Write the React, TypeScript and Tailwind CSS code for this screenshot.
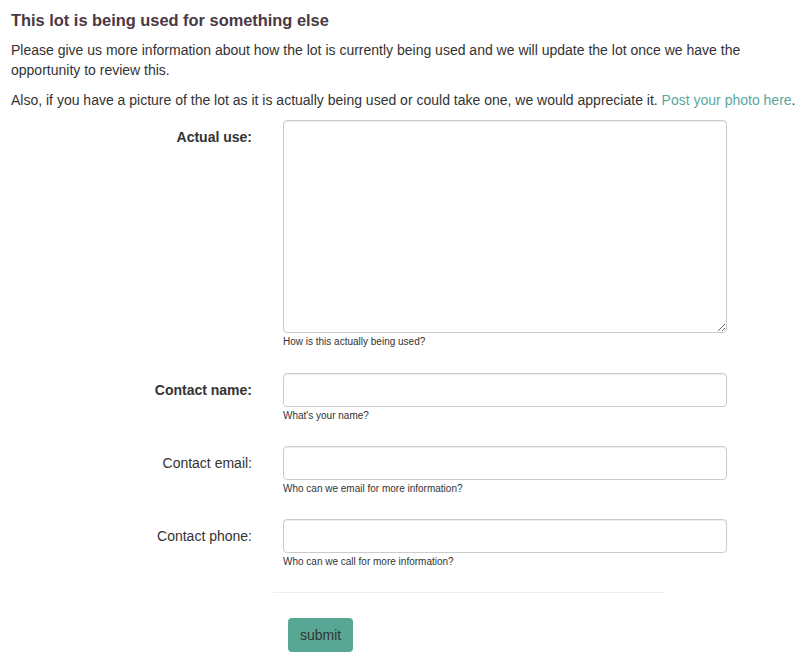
const fieldClass =
  "block w-[444px] rounded-[4px] border border-[#ccc] bg-white px-3 py-[6px] text-[14px] text-[#555] shadow-[inset_0_1px_1px_rgba(0,0,0,0.075)] outline-none";

function Field({
  label,
  help,
  bold,
  className = "",
  children,
}: {
  label: string;
  help: string;
  bold?: boolean;
  className?: string;
  children: React.ReactNode;
}) {
  return (
    <div className={`flex gap-[31px] ${className}`}>
      <label
        className={`w-[241px] shrink-0 pt-[7px] text-right text-[14px] leading-[20px] ${
          bold ? "font-bold" : "font-normal"
        }`}
      >
        {label}
      </label>
      <div>
        {children}
        <p className="mt-[2px] text-[10px] leading-[14px] text-[#333]">{help}</p>
      </div>
    </div>
  );
}

export default function App() {
  return (
    <div className="min-h-screen bg-white pl-[11px] pr-0 pt-[10px] font-['Liberation_Sans',Arial,sans-serif] text-[14px] leading-[20px] text-[#333]">
      <h3 className="mb-[10px] text-[16.4px] font-bold leading-[20px] text-[#4b3843]">
        This lot is being used for something else
      </h3>
      <p className="mb-[10px] pr-[11px]">
        Please give us more information about how the lot is currently being used and we will
        update the lot once we have the opportunity to review this.
      </p>
      <p className="mb-[10px] whitespace-nowrap">
        Also, if you have a picture of the lot as it is actually being used or could take one, we
        would appreciate it.{" "}
        <a href="#" className="text-[#5aa7a0]">
          Post your photo here
        </a>
        .
      </p>

      <form className="flex flex-col gap-[23px]">
        <Field label="Actual use:" help="How is this actually being used?" bold className="mb-[1px]">
          <textarea className={`${fieldClass} h-[213px]`} />
        </Field>
        <Field label="Contact name:" help="What's your name?" bold>
          <input type="text" className={`${fieldClass} h-[34px]`} />
        </Field>
        <Field label="Contact email:" help="Who can we email for more information?">
          <input type="email" className={`${fieldClass} h-[34px]`} />
        </Field>
        <Field label="Contact phone:" help="Who can we call for more information?">
          <input type="tel" className={`${fieldClass} h-[34px]`} />
        </Field>

        <div className="ml-[262px] w-[392px] border-t border-[#eee]" />
      </form>

      <button
        type="button"
        className="ml-[277px] mt-[25px] h-[34px] rounded-[4px] bg-[#58a794] px-3 text-[14px] leading-[20px] text-[#333]"
      >
        submit
      </button>
    </div>
  );
}
